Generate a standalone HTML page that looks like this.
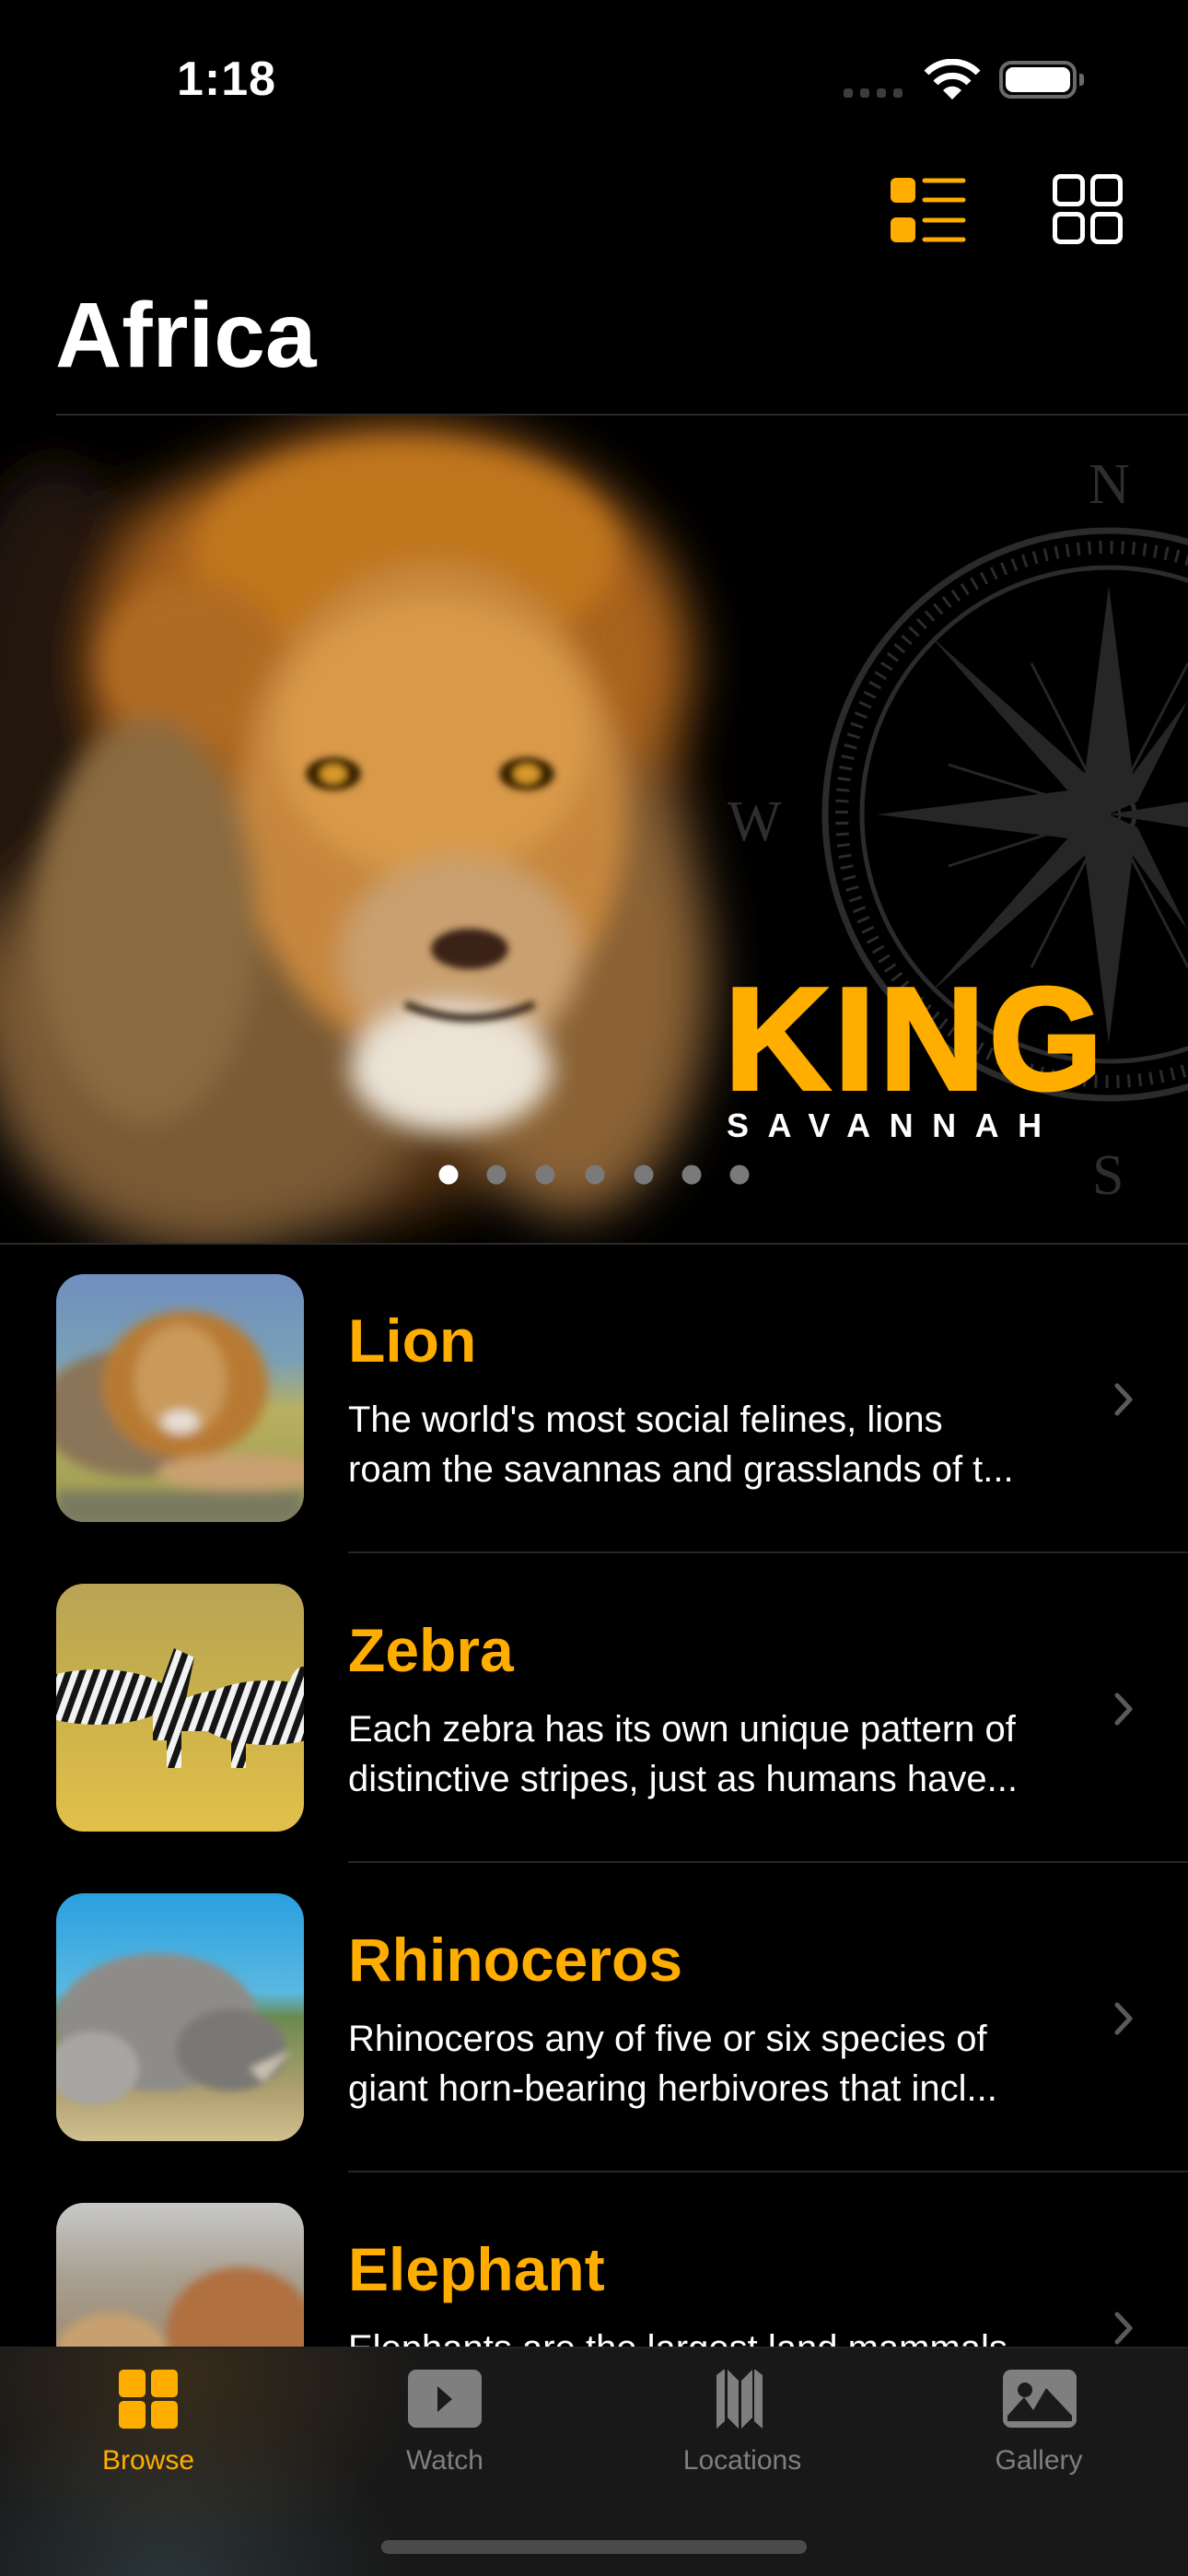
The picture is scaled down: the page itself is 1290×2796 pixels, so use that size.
<!DOCTYPE html>
<html><head><meta charset="utf-8">
<style>
*{margin:0;padding:0;box-sizing:border-box}
html,body{width:1290px;height:2796px;background:#000;overflow:hidden;font-family:"Liberation Sans",sans-serif;color:#fff}
.abs{position:absolute}
.row{position:absolute;left:0;width:1290px;height:336px}
.thumb{position:absolute;left:61px;top:34px;width:269px;height:269px;border-radius:30px;overflow:hidden}
.title{position:absolute;left:378px;top:66px;font-size:66px;font-weight:bold;color:#FFAD00;line-height:80px}
.desc{position:absolute;left:378px;top:165px;width:745px;font-size:40px;line-height:54px;color:#fff}
.desc div{white-space:nowrap;overflow:hidden}
.chev{position:absolute;left:1205px;top:150px}
.sep{position:absolute;left:378px;right:0;top:335px;height:2px;background:#262626}
.tab{position:absolute;top:2572px;width:200px;text-align:center}
.tab .lbl{position:absolute;top:82px;left:0;width:200px;font-size:30px;color:#7f7f7f}
</style></head><body>

<div class="abs" style="left:192px;top:56px;font-size:52px;font-weight:bold;letter-spacing:1px">1:18</div>
<div class="abs" style="left:916px;top:96px;width:10px;height:10px;border-radius:3px;background:#3c3c3c"></div>
<div class="abs" style="left:934px;top:96px;width:10px;height:10px;border-radius:3px;background:#3c3c3c"></div>
<div class="abs" style="left:952px;top:96px;width:10px;height:10px;border-radius:3px;background:#3c3c3c"></div>
<div class="abs" style="left:970px;top:96px;width:10px;height:10px;border-radius:3px;background:#3c3c3c"></div>
<svg class="abs" style="left:1002px;top:64px" width="64" height="46" viewBox="0 0 64 46">
<path d="M32 44 L22 34 A14 14 0 0 1 42 34 Z" fill="#fff"/>
<path d="M14 26 A25 25 0 0 1 50 26" stroke="#fff" stroke-width="7" fill="none"/>
<path d="M4 15 A39 39 0 0 1 60 15" stroke="#fff" stroke-width="7" fill="none"/>
</svg>
<div class="abs" style="left:1085px;top:66px;width:84px;height:41px;border:4px solid #6a6a6a;border-radius:13px"></div>
<div class="abs" style="left:1092px;top:73px;width:70px;height:27px;background:#fff;border-radius:8px"></div>
<div class="abs" style="left:1172px;top:80px;width:5px;height:13px;background:#6a6a6a;border-radius:0 3px 3px 0"></div>

<svg class="abs" style="left:960px;top:186px" width="100" height="84" viewBox="0 0 100 84">
<rect x="7" y="7" width="27" height="27" rx="6" fill="#FFAD00"/>
<rect x="7" y="50" width="27" height="27" rx="6" fill="#FFAD00"/>
<g stroke="#FFAD00" stroke-width="5" stroke-linecap="round">
<line x1="44" y1="10" x2="86" y2="10"/><line x1="44" y1="31" x2="86" y2="31"/>
<line x1="44" y1="53" x2="86" y2="53"/><line x1="44" y1="74" x2="86" y2="74"/></g>
</svg>
<svg class="abs" style="left:1138px;top:184px" width="86" height="86" viewBox="0 0 86 86">
<g fill="none" stroke="#fff" stroke-width="5">
<rect x="7.5" y="7.5" width="30" height="30" rx="6"/><rect x="48.5" y="7.5" width="30" height="30" rx="6"/>
<rect x="7.5" y="48.5" width="30" height="30" rx="6"/><rect x="48.5" y="48.5" width="30" height="30" rx="6"/></g>
</svg>

<div class="abs" style="left:60px;top:304px;font-size:100px;font-weight:bold;line-height:120px">Africa</div>
<div class="abs" style="left:61px;right:0;top:449px;height:2px;background:#2a2a2a"></div>

<svg class="abs" style="left:0;top:451px" width="1290" height="898" viewBox="0 451 1290 898">
<defs>
<filter id="b1" x="-50%" y="-50%" width="200%" height="200%"><feGaussianBlur stdDeviation="28"/></filter>
<filter id="b2" x="-50%" y="-50%" width="200%" height="200%"><feGaussianBlur stdDeviation="14"/></filter>
<filter id="b3"><feGaussianBlur stdDeviation="4"/></filter>
</defs>
<rect x="0" y="451" width="1290" height="898" fill="#000"/>
<g fill="none" stroke="#2b2b2b">
<circle cx="1204" cy="884" r="308" stroke-width="7"/>
<circle cx="1204" cy="884" r="290" stroke-width="14" stroke-dasharray="3 9"/>
<circle cx="1204" cy="884" r="268" stroke-width="5"/>
<circle cx="1204" cy="884" r="28" stroke-width="5"/>
<circle cx="1204" cy="884" r="12" stroke-width="3"/>
</g>
<g fill="#262626">
<polygon points="1204,636 1232,856 1204,884 1176,856"/>
<polygon points="1204,1132 1232,912 1204,884 1176,912"/>
<polygon points="952,884 1176,856 1204,884 1176,912"/>
<polygon points="1290,870 1290,898 1204,884"/>
<polygon points="1010,690 1190,850 1204,884 1170,870"/>
<polygon points="1010,1078 1170,898 1204,884 1190,918"/>
<polygon points="1290,760 1215,860 1204,884 1235,870"/>
<polygon points="1290,1010 1235,898 1204,884 1215,908"/>
</g>
<g stroke="#262626" stroke-width="3">
<line x1="1204" y1="884" x2="1120" y2="720"/><line x1="1204" y1="884" x2="1030" y2="830"/>
<line x1="1204" y1="884" x2="1030" y2="940"/><line x1="1204" y1="884" x2="1120" y2="1050"/>
<line x1="1204" y1="884" x2="1290" y2="720"/><line x1="1204" y1="884" x2="1290" y2="1050"/>
</g>
<g fill="#2e2e2e" font-family="Liberation Serif,serif" font-size="62">
<text x="1182" y="546">N</text><text x="790" y="912">W</text><text x="1186" y="1296">S</text></g>
<g filter="url(#b1)">
<ellipse cx="330" cy="920" rx="420" ry="420" fill="#4a2c0e"/>
<ellipse cx="60" cy="800" rx="120" ry="300" fill="#24160a"/>
<ellipse cx="430" cy="720" rx="320" ry="260" fill="#a8621a"/>
<ellipse cx="230" cy="1120" rx="250" ry="240" fill="#7a5a36"/>
<ellipse cx="620" cy="1060" rx="150" ry="260" fill="#8a6236"/>
</g>
<g filter="url(#b2)">
<ellipse cx="440" cy="600" rx="230" ry="120" fill="#c0761e"/>
<ellipse cx="210" cy="720" rx="100" ry="90" fill="#b06a22"/>
<ellipse cx="470" cy="880" rx="210" ry="270" fill="#c6873e"/>
<ellipse cx="470" cy="800" rx="170" ry="150" fill="#d89a48"/>
<ellipse cx="500" cy="1040" rx="130" ry="110" fill="#c9a070"/>
<ellipse cx="490" cy="1160" rx="110" ry="70" fill="#ebe3d6"/>
<ellipse cx="160" cy="1000" rx="120" ry="220" fill="#8a6a40"/>
</g>
<g filter="url(#b3)">
<ellipse cx="362" cy="840" rx="30" ry="18" fill="#3a2006"/>
<ellipse cx="572" cy="840" rx="30" ry="18" fill="#3a2006"/>
<ellipse cx="362" cy="840" rx="14" ry="10" fill="#d89a2a"/>
<ellipse cx="572" cy="840" rx="14" ry="10" fill="#d89a2a"/>
<ellipse cx="510" cy="1030" rx="42" ry="22" fill="#3a2218"/>
<path d="M440 1090 Q510 1120 580 1090" stroke="#2a1a10" stroke-width="8" fill="none"/>
</g>
<text x="787" y="1182" fill="#FFAE00" font-family="Liberation Sans,sans-serif" font-weight="bold" font-size="158" letter-spacing="5" stroke="#FFAE00" stroke-width="4">KING</text>
<text x="789" y="1234" fill="#fff" font-family="Liberation Sans,sans-serif" font-weight="bold" font-size="36" letter-spacing="20.5">SAVANNAH</text>
<g fill="#7a7a7a">
<circle cx="487" cy="1275" r="10.5" fill="#fff"/><circle cx="539" cy="1275" r="10.5"/><circle cx="592" cy="1275" r="10.5"/>
<circle cx="646" cy="1275" r="10.5"/><circle cx="699" cy="1275" r="10.5"/><circle cx="751" cy="1275" r="10.5"/><circle cx="803" cy="1275" r="10.5"/></g>
</svg>
<div class="abs" style="left:0;right:0;top:1349px;height:2px;background:#2a2a2a"></div>

<div class="row" style="top:1349px">
 <div class="thumb">
 <svg width="269" height="269" viewBox="0 0 269 269"><defs><filter id="t1"><feGaussianBlur stdDeviation="6"/></filter>
 <linearGradient id="g1" x1="0" y1="0" x2="0" y2="1"><stop offset="0" stop-color="#6f8fbf"/><stop offset=".35" stop-color="#7aa0b6"/><stop offset=".55" stop-color="#b9b060"/><stop offset="1" stop-color="#9a9a50"/></linearGradient></defs>
 <rect width="269" height="269" fill="url(#g1)"/>
 <g filter="url(#t1)">
 <ellipse cx="90" cy="150" rx="110" ry="70" fill="#8a7458"/>
 <ellipse cx="140" cy="120" rx="90" ry="80" fill="#b87a30"/>
 <ellipse cx="135" cy="115" rx="50" ry="60" fill="#c99a5a"/>
 <ellipse cx="200" cy="215" rx="90" ry="20" fill="#c9a070"/>
 <rect x="0" y="235" width="269" height="40" fill="#7a7a60"/>
 <ellipse cx="135" cy="160" rx="20" ry="12" fill="#e8e0d8"/>
 </g></svg></div>
 <div class="title">Lion</div>
 <div class="desc"><div>The world's most social felines, lions</div><div>roam the savannas and grasslands of t...</div></div>
 <svg class="chev" width="30" height="40" viewBox="0 0 30 40"><path d="M8 5 L22 20 L8 35" stroke="#5a5a5a" stroke-width="5" fill="none" stroke-linecap="round" stroke-linejoin="round"/></svg>
 <div class="sep"></div>
</div>

<div class="row" style="top:1685px">
 <div class="thumb">
 <svg width="269" height="269" viewBox="0 0 269 269"><defs>
 <linearGradient id="g2" x1="0" y1="0" x2="0" y2="1"><stop offset="0" stop-color="#b9a456"/><stop offset=".45" stop-color="#c8b04a"/><stop offset="1" stop-color="#e2c04a"/></linearGradient>
 <pattern id="zs" width="14" height="14" patternUnits="userSpaceOnUse" patternTransform="rotate(20)"><rect width="14" height="14" fill="#f2f2f2"/><rect width="7" height="14" fill="#151515"/></pattern></defs>
 <rect width="269" height="269" fill="url(#g2)"/>
 <g fill="url(#zs)">
 <ellipse cx="45" cy="123" rx="80" ry="30"/><rect x="105" y="125" width="30" height="45"/>
 <path d="M110 120 L128 70 L150 80 L140 130 Z"/>
 <ellipse cx="230" cy="140" rx="80" ry="35"/><path d="M110 140 Q170 100 250 120 L250 160 L120 160 Z"/>
 <rect x="120" y="150" width="16" height="50"/><rect x="190" y="150" width="16" height="50"/>
 <ellipse cx="268" cy="130" rx="18" ry="40"/></g>
 </svg></div>
 <div class="title">Zebra</div>
 <div class="desc"><div>Each zebra has its own unique pattern of</div><div>distinctive stripes, just as humans have...</div></div>
 <svg class="chev" width="30" height="40" viewBox="0 0 30 40"><path d="M8 5 L22 20 L8 35" stroke="#5a5a5a" stroke-width="5" fill="none" stroke-linecap="round" stroke-linejoin="round"/></svg>
 <div class="sep"></div>
</div>

<div class="row" style="top:2021px">
 <div class="thumb">
 <svg width="269" height="269" viewBox="0 0 269 269"><defs><filter id="t3"><feGaussianBlur stdDeviation="4"/></filter>
 <linearGradient id="g3" x1="0" y1="0" x2="0" y2="1"><stop offset="0" stop-color="#2aa0e0"/><stop offset=".4" stop-color="#5ab8e0"/><stop offset=".5" stop-color="#6a8a50"/><stop offset=".8" stop-color="#b0a070"/><stop offset="1" stop-color="#d0c090"/></linearGradient></defs>
 <rect width="269" height="269" fill="url(#g3)"/>
 <g filter="url(#t3)">
 <ellipse cx="110" cy="140" rx="110" ry="75" fill="#8e8c88"/>
 <ellipse cx="190" cy="170" rx="60" ry="45" fill="#7a7874"/>
 <ellipse cx="40" cy="190" rx="50" ry="40" fill="#a8a6a2"/>
 <path d="M210 190 L255 170 L225 205 Z" fill="#c8c0b0"/>
 </g></svg></div>
 <div class="title">Rhinoceros</div>
 <div class="desc"><div>Rhinoceros any of five or six species of</div><div>giant horn-bearing herbivores that incl...</div></div>
 <svg class="chev" width="30" height="40" viewBox="0 0 30 40"><path d="M8 5 L22 20 L8 35" stroke="#5a5a5a" stroke-width="5" fill="none" stroke-linecap="round" stroke-linejoin="round"/></svg>
 <div class="sep"></div>
</div>

<div class="row" style="top:2357px">
 <div class="thumb">
 <svg width="269" height="269" viewBox="0 0 269 269"><defs><filter id="t4"><feGaussianBlur stdDeviation="5"/></filter>
 <linearGradient id="g4" x1="0" y1="0" x2="0" y2="1"><stop offset="0" stop-color="#c8c8c8"/><stop offset=".3" stop-color="#a8a090"/><stop offset="1" stop-color="#8a6a48"/></linearGradient></defs>
 <rect width="269" height="269" fill="url(#g4)"/>
 <g filter="url(#t4)">
 <ellipse cx="200" cy="140" rx="80" ry="70" fill="#b07040"/>
 <ellipse cx="60" cy="160" rx="60" ry="40" fill="#c8a070"/>
 </g></svg></div>
 <div class="title">Elephant</div>
 <div class="desc"><div>Elephants are the largest land mammals</div></div>
 <svg class="chev" width="30" height="40" viewBox="0 0 30 40"><path d="M8 5 L22 20 L8 35" stroke="#5a5a5a" stroke-width="5" fill="none" stroke-linecap="round" stroke-linejoin="round"/></svg>
</div>

<div class="abs" style="left:0;top:2547px;width:1290px;height:249px;background:radial-gradient(ellipse 260px 200px at 200px 30px,rgba(80,60,30,.55),transparent),radial-gradient(ellipse 260px 200px at 180px 249px,rgba(50,65,70,.7),transparent),#181818;border-top:2px solid #222"></div>
<div class="tab" style="left:61px">
 <svg width="200" height="64" viewBox="0 0 200 64"><g fill="#FFAE00"><rect x="68" y="0" width="29" height="30" rx="5"/><rect x="103" y="0" width="29" height="30" rx="5"/><rect x="68" y="34" width="29" height="30" rx="5"/><rect x="103" y="34" width="29" height="30" rx="5"/></g></svg>
 <div class="lbl" style="color:#FFAE00">Browse</div></div>
<div class="tab" style="left:383px">
 <svg width="200" height="64" viewBox="0 0 200 64"><rect x="60" y="0" width="80" height="63" rx="9" fill="#7f7f7f"/><path d="M92 18 L108 32 L92 46 Z" fill="#1a1a1a"/></svg>
 <div class="lbl">Watch</div></div>
<div class="tab" style="left:706px">
 <svg width="200" height="64" viewBox="0 0 200 64"><g fill="#7f7f7f"><path d="M72 6 L81 -1 L81 56 L72 64 Z"/><path d="M84 0 L96 12 L96 64 L84 52 Z"/><path d="M99 12 L111 0 L111 52 L99 64 Z"/><path d="M113 -1 L122 6 L122 64 L113 56 Z"/></g></svg>
 <div class="lbl">Locations</div></div>
<div class="tab" style="left:1028px">
 <svg width="200" height="64" viewBox="0 0 200 64"><rect x="61" y="0" width="80" height="63" rx="9" fill="#7f7f7f"/><circle cx="85" cy="22" r="8" fill="#1a1a1a"/><path d="M66 56 L66 50 L84 30 L94 44 L108 20 L136 50 L136 56 Z" fill="#1a1a1a"/></svg>
 <div class="lbl">Gallery</div></div>
<div class="abs" style="left:414px;top:2757px;width:462px;height:15px;border-radius:8px;background:#4b4b4b"></div>
</body></html>
